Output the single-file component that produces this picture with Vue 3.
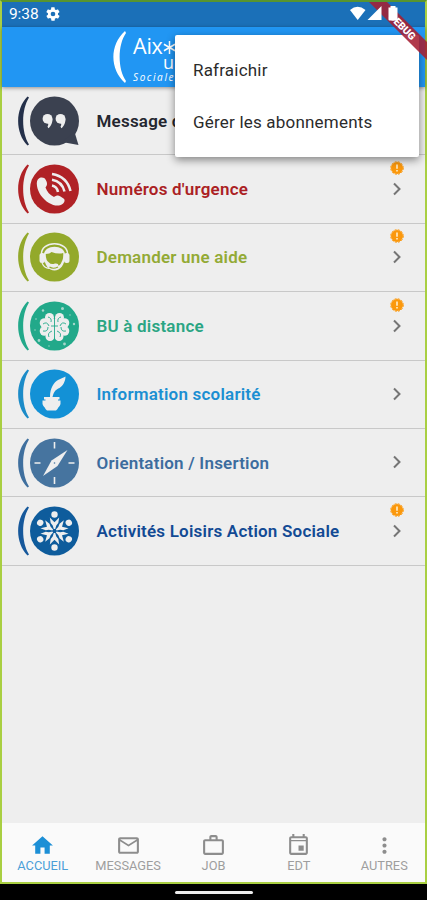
<script setup>
import { ref } from "vue";

const items = ref([
  { id: "message", label: "Message d", color: "#24262f", icon: "#3b4150", arc: "#24304a", alert: false },
  { id: "urgence", label: "Numéros d'urgence", color: "#ab1f24", icon: "#b02226", arc: "#b02226", alert: true },
  { id: "aide", label: "Demander une aide", color: "#93aa35", icon: "#93a92b", arc: "#93a92b", alert: true },
  { id: "bu", label: "BU à distance", color: "#2aa583", icon: "#22a98a", arc: "#22a98a", alert: true },
  { id: "scolarite", label: "Information scolarité", color: "#1b8fd2", icon: "#1391d6", arc: "#1b8bc8", alert: false },
  { id: "orientation", label: "Orientation / Insertion", color: "#3c6c9e", icon: "#46749f", arc: "#3f6f9e", alert: false },
  { id: "loisirs", label: "Activités Loisirs Action Sociale", color: "#124a94", icon: "#0e5c9c", arc: "#16589b", alert: true },
]);

const tabs = ["ACCUEIL", "MESSAGES", "JOB", "EDT", "AUTRES"];
const active = ref("ACCUEIL");
const menu = ["Rafraichir", "Gérer les abonnements"];
</script>

<template>
  <div class="phone">
    <div class="screen">
      <div class="status">
        <span class="time">9:38</span>
        <svg class="gear" viewBox="0 0 24 24">
          <path fill="#fff" fill-rule="evenodd" d="M19.4 13c0-.3.1-.6.1-1s0-.7-.1-1l2.1-1.6c.2-.2.2-.4.1-.6l-2-3.5c-.1-.2-.4-.3-.6-.2l-2.5 1c-.5-.4-1.1-.7-1.7-1l-.4-2.6c0-.3-.2-.5-.5-.5h-4c-.2 0-.4.2-.5.4l-.4 2.7c-.6.2-1.1.6-1.7 1l-2.5-1c-.2-.1-.5 0-.6.2l-2 3.5c-.1.2-.1.5.1.6L4.5 11c0 .3-.1.6-.1 1s0 .7.1 1l-2.1 1.600c-.2.2-.2.4-.1.600l2 3.500c.1.200.4.300.6.200l2.500-1c.5.4 1.100.7 1.700 1l.4 2.600c0 .3.2.5.5.5h4c.2 0 .5-.2.5-.4l.4-2.700c.6-.2 1.100-.6 1.700-1l2.500 1c.2.1.5 0 .6-.2l2-3.500c.1-.2.1-.5-.1-.6zM12 15.500a3.500 3.500 0 1 1 0-7 3.500 3.500 0 0 1 0 7z" />
        </svg>
      </div>

      <header class="appbar">
        <svg class="arc-logo" viewBox="0 0 14 52">
          <path d="M12 0C-3.500 14-3.500 38 12 52L13 50C4.500 38 4.500 14 13 2Z" fill="#fff" />
        </svg>
        <div class="logo">
          <span class="aix">Aix<svg class="star" viewBox="0 0 14 14"><path d="M7 0v14M1 3.500l12 7M13 3.500L1 10.500" stroke="#fff" stroke-width="1.600" /></svg></span>
          <span class="univ">u</span>
          <span class="tagline">Sociale</span>
        </div>
      </header>

      <main class="list">
        <div v-for="item in items" :key="item.id" class="row">
          <svg class="icon" viewBox="0 0 62 50">
            <path d="M9.500 .5C-3 13-3 37 9.500 49.500L11 48.500C3.200 36 3.200 14 11 1.500Z" :fill="item.arc" />
            <circle cx="36.500" cy="25" r="24.500" :fill="item.icon" />

            <g v-if="item.id === 'message'">
              <path d="M44 46L60.500 49L56.500 36Z" :fill="item.icon" />
              <g fill="#eee">
                <circle cx="29.500" cy="22.800" r="4.900" />
                <path d="M34.400 22.500C34.800 27 32.500 31 30.300 32.300L29.500 30.500C30.600 29 30.400 27.500 29.500 26Z" />
                <circle cx="42.500" cy="22.800" r="4.900" />
                <path d="M47.400 22.500C47.800 27 45.500 31 43.300 32.300L42.500 30.500C43.600 29 43.400 27.500 42.500 26Z" />
              </g>
            </g>

            <g v-else-if="item.id === 'urgence'">
              <path fill="#eee" d="M21.500 14C24 13 26.500 13.500 27.800 16C29.500 19 29.500 21 27.500 23.500C29 28 32 31 36 33C38.500 31.500 40 31 42.500 32.500L45.500 34.500C47.500 36 46.500 38.500 44.500 40C41 42.500 36 42 31 39C24.500 35 20 28.500 19 22C18.400 18 19 15.500 21.500 14Z" />
              <g fill="none" stroke="#eee" stroke-width="2.500">
                <path d="M34 21.500Q39 22.500 40 28" />
                <path d="M34 15.800Q44 17.500 46.500 27.500" />
                <path d="M34 10Q49 12.500 52.500 27" />
              </g>
            </g>

            <g v-else-if="item.id === 'aide'">
              <path d="M23.500 23C22 8 51 8 49.500 23" fill="none" stroke="#eee" stroke-width="1.500" />
              <path fill="#eee" d="M26 24C24.500 11.500 48.500 11.500 47 24C47 33 42 38.500 36.500 38.500S26 33 26 24Z" />
              <rect x="21.500" y="21" width="5.500" height="10" rx="2.500" fill="#eee" />
              <rect x="46" y="21" width="5.500" height="10" rx="2.500" fill="#eee" />
              <path :fill="item.icon" d="M27.800 22Q32 22 33.500 20Q40 22.500 45.200 21Q45.500 25 44.500 28Q43 32.500 40.500 34Q41 31 37 31.500Q33 33 31 30.500Q27.500 28 27.800 22Z" />
              <path d="M24 31Q27 37.500 33 36" fill="none" stroke="#eee" stroke-width="1.200" />
              <path d="M31.500 35Q35 37.500 40 35" fill="none" :stroke="item.icon" stroke-width="1.200" />
            </g>

            <g v-else-if="item.id === 'bu'">
              <g fill="#eee">
                <circle cx="31.500" cy="16.500" r="4.500" /><circle cx="41.500" cy="16.500" r="4.500" />
                <circle cx="26.500" cy="22" r="4.800" /><circle cx="46.500" cy="22" r="4.800" />
                <circle cx="26.500" cy="30" r="4.800" /><circle cx="46.500" cy="30" r="4.800" />
                <circle cx="32" cy="35.500" r="4.500" /><circle cx="41" cy="35.500" r="4.500" />
                <rect x="28" y="18" width="17" height="17" />
              </g>
              <g fill="#eee" fill-opacity=".65">
                <circle cx="44.500" cy="7.500" r="1.500" />
                <circle cx="25" cy="9.500" r="1.200" /><circle cx="18" cy="18" r=".8" />
                <circle cx="56" cy="23" r="1.200" /><circle cx="21" cy="39.500" r="1.400" />
                <circle cx="46.500" cy="43" r="1.400" /><circle cx="52" cy="14" r=".7" />
                <circle cx="17" cy="29" r=".7" /><circle cx="31" cy="45" r=".7" />
              </g>
              <g fill="none" :stroke="item.icon" stroke-width=".9">
                <path d="M36.500 12V40M30 16Q34 17 33 21M43 16Q39 17 40 21M25 23Q29 20 31 25M48 23Q44 20 42 25M25 30Q30 31 30 26M48 30Q43 31 43 26M31 36Q29 32 34 30M42 36Q44 32 39 30M33 25H40" />
              </g>
            </g>

            <g v-else-if="item.id === 'scolarite'" fill="#eee">
              <path d="M32 28C32 19 36 13 40 11C43 9.500 46 8.500 47.500 7.500C47.500 12 45 17 41.500 19C38 20.500 36 22 34.500 28Z" />
              <path d="M26 28H41.500V30.500H40V31.500H42.500V35C42 37 40 38.500 39.500 40L38 41.500H29L27.500 40C27 38.500 25 37 24.500 35V31.500H27.500V30.500H26Z" />
            </g>

            <g v-else-if="item.id === 'orientation'" fill="#eee">
              <path d="M49.500 12L39.500 28L25 38L33.500 22.500Z" />
              <path d="M35.700 4h1.600v6.500h-1.600zM35.700 39h1.600v7h-1.600zM16.500 24.200h6v1.600h-6zM50.500 24.200h6v1.600h-6z" />
              <circle cx="36.500" cy="25" r=".8" :fill="item.icon" />
            </g>

            <g v-else fill="#eee">
              <g v-for="n in 6" :key="n" :transform="`rotate(${n * 60} 36.5 25)`">
                <circle cx="36.500" cy="8.500" r="3.200" />
                <path d="M31.800 11.500L36.500 16.300L41.200 11.500L40.300 17L38.300 19.500L37.200 23H35.800L34.700 19.500L32.700 17Z" />
              </g>
            </g>
          </svg>
          <span class="label" :style="{ color: item.color }">{{ item.label }}</span>
          <div class="side">
            <svg v-if="item.alert" class="alert" viewBox="0 0 14 14">
              <circle cx="7" cy="7" r="6" fill="#fb980c" />
              <circle cx="7" cy="7" r="6.300" fill="none" stroke="#fb980c" stroke-width="1" stroke-dasharray="2 1.300" />
              <path d="M7 3.500v4.300M7 9v1.500" stroke="#fff3d8" stroke-width="1.500" />
            </svg>
            <svg v-if="item.id !== 'message'" class="chevron" viewBox="0 0 10 14">
              <path d="M2 1.500L7.500 7L2 12.500" fill="none" stroke="#757575" stroke-width="2" />
            </svg>
          </div>
        </div>
      </main>

      <nav class="tabs">
        <div v-for="tab in tabs" :key="tab" class="tab" :class="{ active: tab === active }">
          <svg viewBox="0 0 24 24">
            <path v-if="tab === 'ACCUEIL'" fill="currentColor" d="M10 20v-6h4v6h5v-8h3L12 3 2 12h3v8z" />
            <path v-else-if="tab === 'MESSAGES'" fill="currentColor" d="M22 6c0-1.100-.9-2-2-2H4c-1.100 0-2 .9-2 2v12c0 1.100.9 2 2 2h16c1.100 0 2-.9 2-2V6zm-2 0l-8 5-8-5h16zm0 12H4V8l8 5 8-5v10z" />
            <path v-else-if="tab === 'JOB'" fill="currentColor" d="M14 6V4h-4v2h4zM4 8v11h16V8H4zm16-2c1.110 0 2 .89 2 2v11c0 1.110-.89 2-2 2H4c-1.110 0-2-.89-2-2V8c0-1.110.89-2 2-2h4V4c0-1.110.89-2 2-2h4c1.110 0 2 .89 2 2v2h4z" />
            <path v-else-if="tab === 'EDT'" fill="currentColor" d="M17 12h-5v5h5v-5zM16 1v2H8V1H6v2H5c-1.110 0-1.990.9-1.990 2L3 19c0 1.100.89 2 2 2h14c1.100 0 2-.9 2-2V5c0-1.100-.9-2-2-2h-1V1h-2zm3 18H5V8h14v11zM5 6.700V5h14v1.700z" />
            <path v-else fill="currentColor" d="M12 8c1.100 0 2-.9 2-2s-.9-2-2-2-2 .9-2 2 .9 2 2 2zm0 2c-1.100 0-2 .9-2 2s.9 2 2 2 2-.9 2-2-.9-2-2-2zm0 6c-1.100 0-2 .9-2 2s.9 2 2 2 2-.9 2-2-.9-2-2-2z" />
          </svg>
          <span>{{ tab }}</span>
        </div>
      </nav>
    </div>

    <div class="gesture"><div class="pill"></div></div>

    <div class="menu">
      <div v-for="entry in menu" :key="entry" class="entry">{{ entry }}</div>
    </div>

    <!-- debug ribbon and system icons, above everything else -->
    <svg class="corner" viewBox="0 0 80 70">
      <path d="M22 2H40L80 42V60Z" fill="#a51f33" fill-opacity=".88" />
      <g fill="#fff">
        <path d="M3 10Q10.500 3.500 18.500 10L10.700 20Z" />
        <path d="M34.500 6V20H20.500Z" />
        <path d="M43.500 6H48.500V7.500H50.500V19.500Q50.500 20.500 49.500 20.500H42.500Q41.500 20.500 41.500 19.500V7.500H43.500Z" />
      </g>
      <text transform="translate(55.5 26.5) rotate(45)" text-anchor="middle" y="3.600" class="debug">DEBUG</text>
    </svg>
  </div>
</template>

<style>
body {
  background: #000;
}
</style>

<style scoped>
.phone {
  position: relative;
  width: 427px;
  height: 900px;
  overflow: hidden;
  background: #000;
  font-family: Roboto, sans-serif;
}
.screen {
  box-sizing: border-box;
  height: 884px;
  border: 2px solid #a9cf42;
  border-top-color: #58942f;
  background: #eee;
  display: flex;
  flex-direction: column;
}
.status {
  height: 25px;
  flex: none;
  background: #1b70b8;
  display: flex;
  align-items: center;
  padding: 0 7px;
  color: #fff;
}
.time {
  width: 30px;
  font-size: 15.500px;
  letter-spacing: -0.1px;
  margin-top: -1px;
  white-space: nowrap;
}
.gear {
  width: 16px;
  height: 16px;
  margin-left: 6px;
  margin-top: -2px;
}
.appbar {
  height: 60px;
  flex: none;
  background: #2196f3;
  display: flex;
  padding: 4px 0 0 111px;
  box-sizing: border-box;
  color: #fff;
  box-shadow: 0 1px 4px rgba(0, 0, 0, 0.4);
  z-index: 1;
}
.arc-logo {
  width: 14px;
  height: 52px;
  flex: none;
}
.logo {
  display: flex;
  flex-direction: column;
  margin-left: 6px;
  font-family: "Open Sans", sans-serif;
}
.aix {
  font-size: 21.500px;
  line-height: 22px;
  margin-top: 4px;
  letter-spacing: -0.2px;
}
.star {
  width: 13px;
  height: 13px;
}
.univ {
  font-size: 18px;
  line-height: 12px;
  margin-top: -1px;
  padding-left: 30px;
}
.tagline {
  font-size: 10px;
  line-height: 10px;
  margin-top: 4px;
  font-style: italic;
  letter-spacing: 1.600px;
  white-space: nowrap;
}
.list {
  flex: 1;
}
.row {
  height: 68.400px;
  box-sizing: border-box;
  border-bottom: 1.500px solid #c8c8c8;
  display: flex;
  align-items: center;
  padding-left: 16px;
}
.icon {
  width: 62px;
  height: 50px;
  flex: none;
}
.label {
  flex: 1;
  margin-left: 16.500px;
  font-size: 17px;
  font-weight: 600;
  letter-spacing: 0.210px;
  white-space: nowrap;
}
.side {
  width: 16px;
  height: 100%;
  margin-right: 20px;
  display: flex;
  flex-direction: column;
  align-items: center;
  justify-content: flex-end;
}
.alert {
  width: 14px;
  height: 14px;
  margin-bottom: 7px;
}
.chevron {
  width: 10px;
  height: 14px;
  margin-bottom: 27px;
}
.tabs {
  height: 59px;
  flex: none;
  background: #fafafa;
  display: grid;
  grid-template-columns: repeat(5, 85.400px);
  justify-content: center;
}
.tab {
  display: flex;
  flex-direction: column;
  align-items: center;
  color: #8d8d8d;
  padding-top: 10px;
  font-size: 12.800px;
  line-height: 15px;
}
.tab svg {
  width: 25px;
  height: 25px;
}
.tab span {
  color: #9e9e9e;
}
.tab.active {
  color: #1c8fd6;
}
.tab.active span {
  color: #4b9fd8;
}
.gesture {
  height: 16px;
  display: flex;
  justify-content: center;
  align-items: center;
}
.pill {
  width: 78px;
  height: 3px;
  border-radius: 2px;
  background: #ececec;
}
.menu {
  position: absolute;
  z-index: 2;
  left: 175px;
  top: 35px;
  width: 244px;
  height: 122px;
  box-sizing: border-box;
  padding: 9px 18px;
  background: #fff;
  border-radius: 2px;
  box-shadow: 0 3px 8px rgba(0, 0, 0, 0.45);
}
.entry {
  height: 52px;
  line-height: 52px;
  font-size: 17px;
  letter-spacing: 0.200px;
  color: #2b2b2b;
  white-space: nowrap;
}
.corner {
  position: absolute;
  z-index: 3;
  right: 0;
  top: 0;
  width: 80px;
  height: 70px;
}
.debug {
  font-family: Roboto, sans-serif;
  font-size: 10.200px;
  font-weight: 900;
  fill: #fff;
}
</style>
